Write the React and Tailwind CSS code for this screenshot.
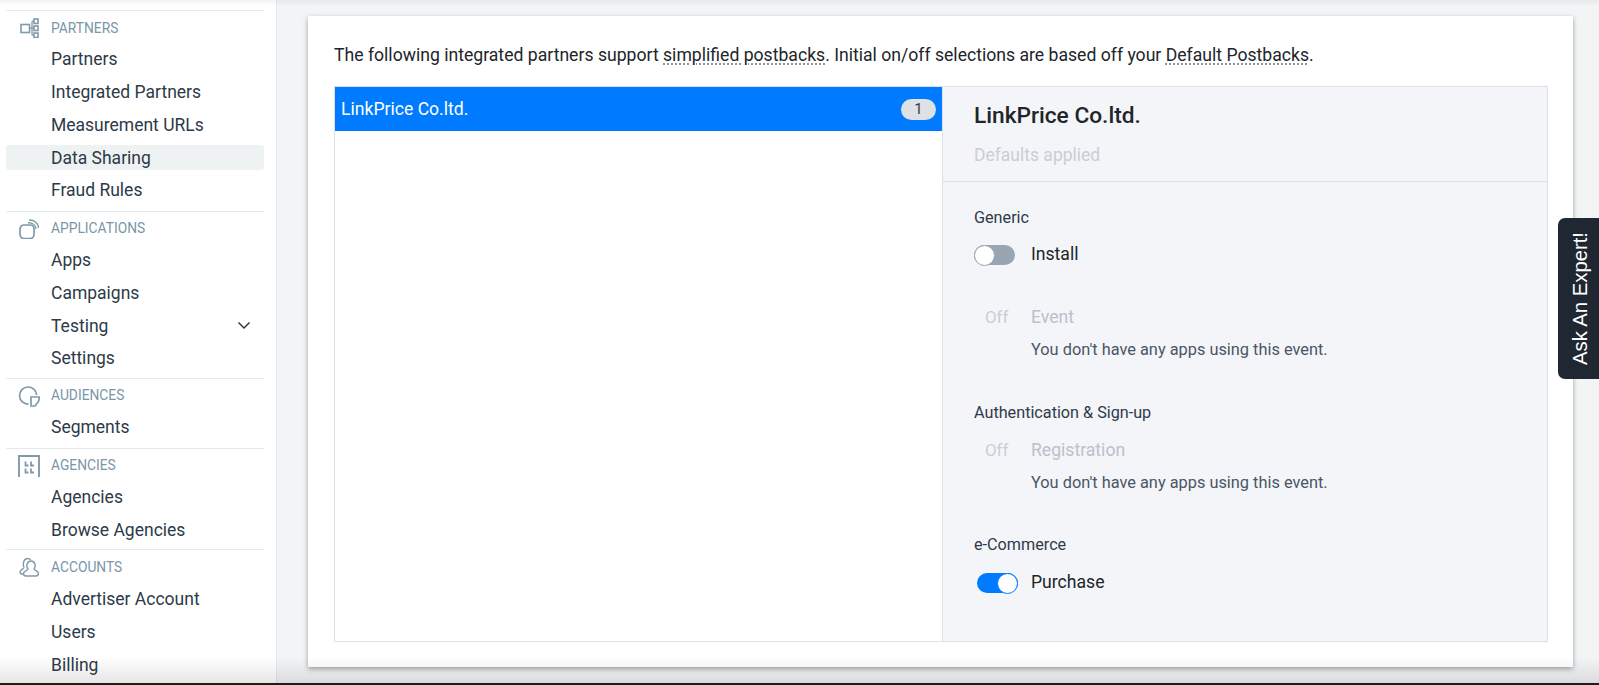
import React from "react";

const Partners = () => (
  <svg width="20" height="20" viewBox="0 0 20 20" fill="none" stroke="#7f9bab" strokeWidth="1.600">
    <rect x="2" y="6.500" width="8.500" height="8" />
    <rect x="15" y="1" width="4" height="4.500" />
    <rect x="15" y="8" width="4" height="4.500" />
    <rect x="15" y="15" width="4" height="4.500" />
    <path d="M10.500 10.200h4.500M13 3.200v14M13 3.200h2M13 17.200h2" strokeWidth="1.300" />
  </svg>
);
const Apps = () => (
  <svg width="20" height="20" viewBox="0 0 20 20" fill="none" stroke="#7f9bab">
    <rect x="1" y="6" width="14" height="13.500" rx="4" strokeWidth="1.700" />
    <path d="M9 3.800C13 3.500 16.800 6 17 10" strokeWidth="1.400" />
    <path d="M10 1C15 .8 19.300 4 19.500 9" strokeWidth="1.400" />
  </svg>
);
const Audiences = () => (
  <svg width="22" height="22" viewBox="0 0 22 22" fill="none" stroke="#7f9bab" strokeWidth="1.700">
    <path d="M10.500 19.200A8.600 8.600 0 1 1 18.700 10" />
    <path d="M13 12h8.500l-1 4.500-3.500 4.500h-4z" />
  </svg>
);
const Agencies = () => (
  <svg width="22" height="22" viewBox="0 0 22 22" fill="none" stroke="#7f9bab" strokeWidth="1.900">
    <path d="M1 22V1h20v21" />
    <path d="M7.500 6.500v4h3M13 6.500v4h3M7.500 13.500v4h3M13 13.500v4h3" strokeWidth="1.800" />
  </svg>
);
const Accounts = () => (
  <svg width="20" height="20" viewBox="0 0 20 20" fill="none" stroke="#7f9bab" strokeWidth="1.400">
    <path d="M5 10.500C3.500 7 4.500 1.500 8.500 1.500c1.500 0 2.500.5 3.200 1.500" />
    <path d="M5 10.500c0 1.500-4 2-4 4.500 0 1 .8 2 2 2h1" />
    <path d="M9 12C7 9.500 7.500 4 12 4s5 5.500 3 8c0 1.500 4.500 2 4.500 4.500 0 1.500-1 2.500-2.500 2.500H7c-1.500 0-2.500-1-2.500-2.500C4.500 14 9 13.500 9 12z" />
  </svg>
);

const Section = ({ icon, title, items, active, chevron, tall, loose }) => (
  <div className={`ml-1.5 mr-[12px] border-t border-[#e3e9ec] ${loose ? "pb-[4px]" : "pb-[3px]"}`}>
    <div className={`flex items-center ${tall ? "h-[33px] pt-[1px]" : "h-[32px] pt-[2px]"}`}>
      <div className="flex w-[44px] justify-center pl-[2px]">{icon}</div>
      <span className="pl-px text-[13.800px] text-[#7b96a8]">{title}</span>
    </div>
    {items.map((t) => (
      <div key={t} className="h-[32.750px] py-[4px] text-[17.500px] text-[#2d3a48]">
        <div className={`flex h-full items-center justify-between rounded-[3px] pl-[45px] pr-[13px] ${t === active ? "bg-[#eff2f2]" : ""}`}>
          <span>{t}</span>
          {t === chevron && (
            <svg width="14" height="14" viewBox="0 0 14 14" fill="none" stroke="#2d3a48" strokeWidth="1.500" className="-translate-y-px">
              <path d="M1.500 4.500l5.500 5.500 5.500-5.500" />
            </svg>
          )}
        </div>
      </div>
    ))}
  </div>
);

const Dotted = ({ children }) => (
  <span className="underline decoration-dotted decoration-[#8a95a0] underline-offset-[3px]">{children}</span>
);

const Toggle = ({ on }) => (
  <div className={`flex h-[20px] w-[41px] items-center rounded-full ${on ? "justify-end bg-[#007bff]" : "bg-[#9aa5b4]"}`}>
    <div className={`h-[21px] w-[21px] rounded-full border bg-white ${on ? "border-[#007bff]" : "border-[#9aa5b4]"}`} />
  </div>
);

const EventOff = ({ name }) => (
  <div className="flex">
    <span className="w-[57px] pl-[11px] text-[16.800px] text-[#c8ced6]">Off</span>
    <div>
      <div className="h-[24px] leading-[24px] text-[#b9c1cb]">{name}</div>
      <div className="mt-[9px] text-[16.350px] leading-[24px] text-[#4a5666]">You don't have any apps using this event.</div>
    </div>
  </div>
);

export default function App() {
  return (
    <div
      className="relative flex h-[685px] w-[1599px] overflow-hidden bg-[#f3f4f6] text-[16px] text-[#212529]"
      style={{ fontFamily: "Roboto, sans-serif" }}
    >
      <aside className="h-full w-[277px] shrink-0 border-r border-[#e3e8ec] bg-white pt-[10px]">
        <Section loose icon={<Partners />} title="PARTNERS" items={["Partners", "Integrated Partners", "Measurement URLs", "Data Sharing", "Fraud Rules"]} active="Data Sharing" />
        <Section icon={<Apps />} title="APPLICATIONS" items={["Apps", "Campaigns", "Testing", "Settings"]} chevron="Testing" />
        <Section loose icon={<Audiences />} title="AUDIENCES" items={["Segments"]} />
        <Section icon={<Agencies />} title="AGENCIES" items={["Agencies", "Browse Agencies"]} />
        <Section tall icon={<Accounts />} title="ACCOUNTS" items={["Advertiser Account", "Users", "Billing"]} />
      </aside>

      <main className="min-w-0 flex-1 pl-[31px] pr-[26px] pt-[16px]">
        <div className="flex h-[651px] flex-col bg-white pb-[25px] pl-[26px] pr-[25px] pt-[26px] shadow-[0_2px_5px_rgba(0,0,0,0.35)]">
          <p className="mb-[20px] h-[24px] whitespace-nowrap pt-[1px] text-[17.620px] leading-[24px]">
            The following integrated partners support <Dotted>simplified postbacks</Dotted>. Initial on/off selections are based off your <Dotted>Default Postbacks</Dotted>.
          </p>
          <div className="flex min-h-0 flex-1 border border-[#dee2e6]">
            <div className="w-[608px] shrink-0 border-r border-[#dee2e6]">
              <div className="flex h-[44px] items-center justify-between bg-[#007bff] pl-[6px] pr-[6px] text-white">
                <span className="text-[17.600px]">LinkPrice Co.ltd.</span>
                <span className="flex h-[21px] w-[35px] items-center justify-center rounded-full bg-[#dee2e6] text-[15px] text-[#343a40]">1</span>
              </div>
            </div>
            <div className="min-w-0 flex-1 bg-[#f4f5f8]">
              <div className="h-[95px] border-b border-[#dee2e6] px-[31px] pt-[15px]">
                <div className="text-[22.700px] font-medium leading-[28px]">LinkPrice Co.ltd.</div>
                <div className="mt-[13px] text-[17.500px] leading-[24px] text-[#c9ced6]">Defaults applied</div>
              </div>
              <div className="px-[31px] pt-[25px] text-[#2f3a4a]">
                <div className="text-[16.200px] leading-[22px]">Generic</div>
                <div className="mt-[14px] flex h-[24px] items-center">
                  <Toggle />
                  <span className="mb-[2px] ml-[16px] text-[17.600px] text-[#212529]">Install</span>
                </div>
                <div className="mt-[38px] text-[17.600px]">
                  <EventOff name="Event" />
                </div>
                <div className="mt-[40px] text-[16.200px] leading-[22px]">Authentication &amp; Sign-up</div>
                <div className="mt-[14px] text-[17.600px]">
                  <EventOff name="Registration" />
                </div>
                <div className="mt-[39px] text-[16.200px] leading-[22px]">e-Commerce</div>
                <div className="mt-[15px] flex h-[24px] items-center pl-[3px]">
                  <Toggle on />
                  <span className="mb-[2px] ml-[13px] text-[17.600px] text-[#212529]">Purchase</span>
                </div>
              </div>
            </div>
          </div>
        </div>
      </main>

      <div className="absolute right-0 top-[218px] flex h-[161px] w-[41px] items-center justify-center rounded-l-[7px] bg-[#1f2733] pl-[3px]">
        <span
          className="rotate-180 whitespace-nowrap text-[20.300px] text-white [writing-mode:vertical-rl]"
          style={{ fontFamily: '"Liberation Sans", sans-serif' }}
        >
          Ask An Expert!
        </span>
      </div>
      <div className="pointer-events-none absolute inset-x-0 top-0 h-[6px] bg-gradient-to-b from-black/5 to-transparent" />
      <div className="pointer-events-none absolute inset-x-0 bottom-[2px] h-[26px] bg-gradient-to-t from-black/10 to-transparent" />
      <div className="absolute inset-x-0 bottom-0 h-[2px] bg-[#1c1c1c]" />
    </div>
  );
}
